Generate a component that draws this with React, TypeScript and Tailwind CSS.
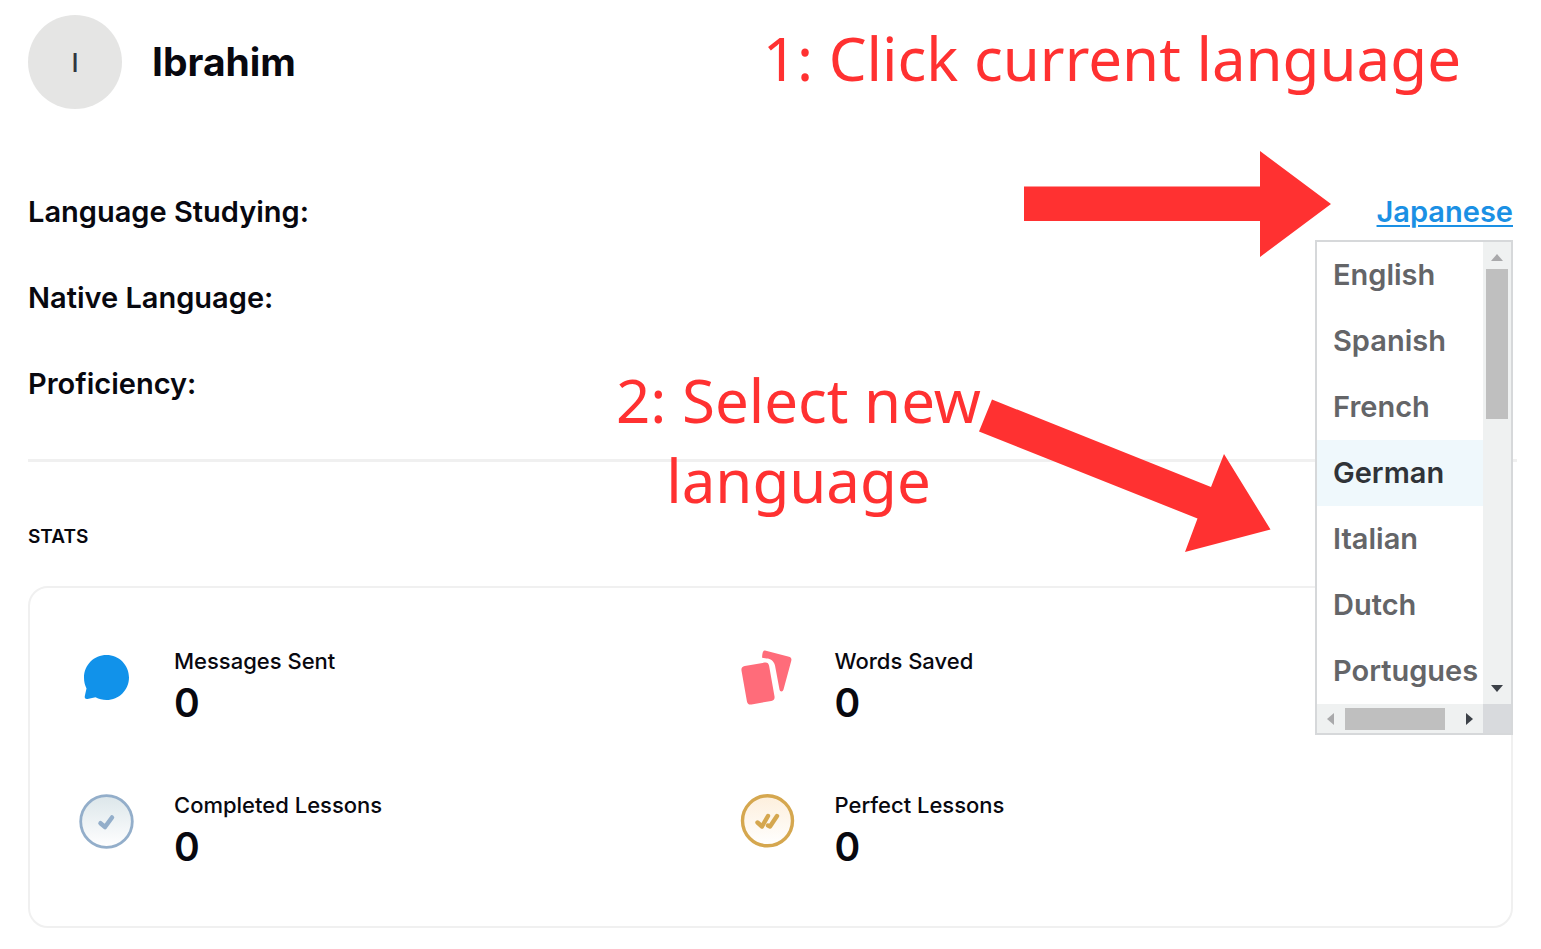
import { useState } from 'react'
import type { ReactNode } from 'react'
import clsx from 'clsx'

const languages = ['English', 'Spanish', 'French', 'German', 'Italian', 'Dutch', 'Portuguese']

function MessageIcon() {
  return (
    <svg width="56" height="56" viewBox="0 0 56 56" fill="#1192ea" aria-hidden="true">
      <path d="M28.500 5C41 5 51 15 51 27.500S41 50 28.500 50C24.500 50 21 49 17.500 47.200L9.500 49C7.500 49.300 6.300 48 6.800 46L8.500 38.500C6.800 35 6 31.500 6 27.500C6 15 16 5 28.500 5Z" />
    </svg>
  )
}

function CardsIcon() {
  return (
    <svg width="56" height="56" viewBox="0 0 56 56" fill="#ff6c7a" aria-hidden="true">
      <rect x="5" y="14" width="28" height="39" rx="4" transform="rotate(-10 19 33.500)" />
      <path d="M26 0.500L50 6.800C52 7.400 52.800 8.800 52.300 10.800L44.500 39.500C43.800 42 41 42 40.500 39.500L36 15.500C34.800 11 31.500 8.600 27.500 8.600L23.200 7.800C23 7 23.200 5.500 23.400 4C23.900 1.500 24.500 0.200 26 0.500Z" />
    </svg>
  )
}

function CompletedIcon() {
  return (
    <svg width="56" height="56" viewBox="0 0 56 56" fill="none" aria-hidden="true">
      <defs>
        <linearGradient id="completed" x1="0" y1="0" x2="0" y2="1">
          <stop stopColor="#dce6ea" />
          <stop offset="1" stopColor="#ffffff" />
        </linearGradient>
      </defs>
      <circle cx="28.500" cy="27.500" r="25.800" fill="url(#completed)" stroke="#93aeca" strokeWidth="2.800" />
      <path d="M22.500 29.200L27 33L34 23.500" stroke="#93aeca" strokeWidth="4.500" strokeLinecap="round" strokeLinejoin="round" />
    </svg>
  )
}

function PerfectIcon() {
  return (
    <svg width="56" height="56" viewBox="0 0 56 56" fill="none" aria-hidden="true">
      <defs>
        <linearGradient id="perfect" x1="0" y1="0" x2="0" y2="1">
          <stop stopColor="#fdefdc" />
          <stop offset="1" stopColor="#ffffff" />
        </linearGradient>
      </defs>
      <circle cx="28.500" cy="26.800" r="25" fill="url(#perfect)" stroke="#d5a74f" strokeWidth="3.400" />
      <path
        d="M18.500 28.500L23 32.500L29 22M29 31.500L31 32.500L38 22"
        stroke="#d5a74f"
        strokeWidth="4.400"
        strokeLinecap="round"
        strokeLinejoin="round"
      />
    </svg>
  )
}

const stats = [
  { label: 'Messages Sent', value: 0, icon: <MessageIcon /> },
  { label: 'Words Saved', value: 0, icon: <CardsIcon /> },
  { label: 'Completed Lessons', value: 0, icon: <CompletedIcon /> },
  { label: 'Perfect Lessons', value: 0, icon: <PerfectIcon /> },
]

function Stat({ label, value, icon }: { label: string; value: number; icon: ReactNode }) {
  return (
    <div className="flex items-start gap-10">
      <div className="pt-1">{icon}</div>
      <div>
        <p className="text-[22px] leading-[30px] font-medium">{label}</p>
        <p className="text-[39px] leading-[54px] font-semibold">{value}</p>
      </div>
    </div>
  )
}

function Arrow({ direction }: { direction: 'up' | 'down' | 'left' | 'right' }) {
  const shapes = {
    up: 'M0 7L6 0L12 7Z',
    down: 'M0 0H12L6 7Z',
    left: 'M7 0V12L0 6Z',
    right: 'M0 0L7 6L0 12Z',
  }
  const vertical = direction === 'up' || direction === 'down'

  return (
    <svg
      width={vertical ? 12 : 7}
      height={vertical ? 7 : 12}
      className={clsx(direction === 'down' || direction === 'right' ? 'fill-[#3c4148]' : 'fill-[#a9a9ab]')}
      aria-hidden="true"
    >
      <path d={shapes[direction]} />
    </svg>
  )
}

function LanguageMenu({ onSelect }: { onSelect: (language: string) => void }) {
  return (
    <div className="absolute top-full right-0 z-10 mt-2 w-[198px] border-2 border-[#d6d8da] bg-white">
      <div className="flex">
        <ul className="min-w-0 flex-1 overflow-hidden">
          {languages.map((language) => (
            <li key={language}>
              <button
                type="button"
                onClick={() => onSelect(language)}
                className={clsx(
                  'h-[66px] w-full pl-4 text-left text-[29px] font-semibold whitespace-nowrap',
                  language === 'German' ? 'bg-[#eff8fc] text-[#303338]' : 'text-[#646568]'
                )}
              >
                {language === 'Portuguese' ? 'Portugues' : language}
              </button>
            </li>
          ))}
        </ul>
        <div className="flex w-7 flex-col items-center justify-between bg-[#eff1f1] py-3">
          <div className="flex flex-col items-center gap-2">
            <Arrow direction="up" />
            <div className="h-[150px] w-[22px] bg-[#bfbfbf]" />
          </div>
          <Arrow direction="down" />
        </div>
      </div>
      <div className="flex h-[29px]">
        <div className="flex flex-1 items-center justify-between bg-[#eff1f1] px-[10px]">
          <div className="flex items-center gap-[11px]">
            <Arrow direction="left" />
            <div className="h-[22px] w-[100px] bg-[#bfbfbf]" />
          </div>
          <Arrow direction="right" />
        </div>
        <div className="w-7 bg-[#d8dadd]" />
      </div>
    </div>
  )
}

export default function App() {
  const [current, setCurrent] = useState('Japanese')
  const [open, setOpen] = useState(true)

  const handleSelect = (language: string) => {
    setCurrent(language)
    setOpen(false)
  }

  return (
    <main className="relative bg-white px-7 pt-[15px] pb-[21px] font-['Inter',sans-serif] text-[#08080f]">
      <header className="flex items-center gap-[30px]">
        <div className="flex size-[94px] items-center justify-center rounded-full bg-[#e5e5e4] text-[26px] font-medium text-[#303640]">
          I
        </div>
        <h1 className="text-[39px] font-bold">Ibrahim</h1>
      </header>

      <section className="mt-[60px] text-[29px] font-semibold">
        <div className="flex h-[86px] items-center justify-between">
          <span>Language Studying:</span>
          <div className="relative">
            <button
              type="button"
              aria-expanded={open}
              onClick={() => setOpen(!open)}
              className="block leading-10 text-[#1b90e4] underline decoration-2 underline-offset-3"
            >
              {current}
            </button>
            {open && <LanguageMenu onSelect={handleSelect} />}
          </div>
        </div>
        <div className="flex h-[86px] items-center">Native Language:</div>
        <div className="flex h-[86px] items-center">Proficiency:</div>
      </section>

      <hr className="mt-8 -mr-1 border-t-3 border-[#f0f0f0]" />

      <h2 className="mt-[61px] text-[19px] leading-7 font-semibold">STATS</h2>

      <section className="mt-[35px] grid grid-cols-2 gap-y-[60px] rounded-[20px] border-2 border-[#f0f0f0] pt-[58px] pr-28 pb-[52px] pl-12">
        {stats.map((stat) => (
          <Stat key={stat.label} {...stat} />
        ))}
      </section>

      {/* Walkthrough notes over the page */}
      <p className="absolute top-[18px] right-20 font-['Noto_Sans',sans-serif] text-[60px] leading-20 text-[#ff3131]">
        1: Click current language
      </p>
      <svg className="absolute top-[151px] right-[210px]" width="307" height="106" fill="#ff3131" aria-hidden="true">
        <path d="M0 35.500H236V0L307 53L236 106V70H0Z" />
      </svg>
      <p className="absolute top-[360px] right-[560px] text-center font-['Noto_Sans',sans-serif] text-[60px] leading-20 text-[#ff3131]">
        2: Select new
        <br />
        language
      </p>
      <svg className="absolute top-[399px] right-[270px]" width="292" height="153" fill="#ff3131" aria-hidden="true">
        <path d="M13 0.500L232 88L245 55L291.500 130.500L206 153L218.500 119.500L0 32.500Z" />
      </svg>
    </main>
  )
}
